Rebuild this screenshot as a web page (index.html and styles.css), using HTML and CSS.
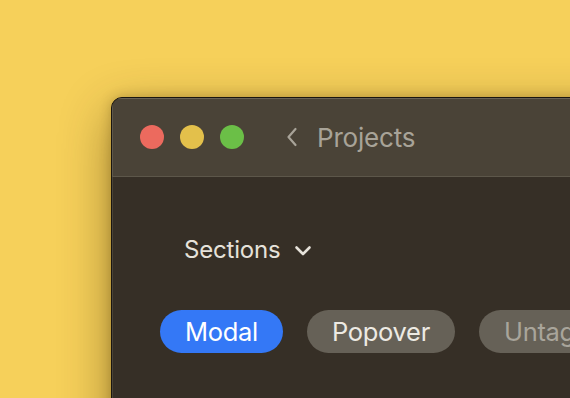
FILE: index.html
```html
<!DOCTYPE html>
<html>
<head>
<meta charset="utf-8">
<link rel="stylesheet" href="styles.css">
</head>
<body>
<div class="desk">
  <div class="window">
    <div class="titlebar">
      <div class="lights">
        <span class="light red"></span>
        <span class="light yellow"></span>
        <span class="light green"></span>
      </div>
      <svg class="back" width="12" height="20" viewBox="0 0 12 20"><path d="M9.5 2 L2.5 10 L9.5 18" fill="none" stroke="#a8a398" stroke-width="2.2" stroke-linecap="round" stroke-linejoin="round"/></svg>
      <span class="title">Projects</span>
    </div>
    <div class="content">
      <div class="sections">
        <span>Sections</span>
        <svg class="down" width="18" height="12" viewBox="0 0 18 12"><path d="M2.5 2.5 L9 9 L15.5 2.5" fill="none" stroke="#e6e2da" stroke-width="2.6" stroke-linecap="round" stroke-linejoin="round"/></svg>
      </div>
      <div class="pills">
        <span class="pill active">Modal</span>
        <span class="pill">Popover</span>
        <span class="pill dim">Untagged</span>
      </div>
    </div>
  </div>
</div>
</body>
</html>
```
FILE: styles.css
```css
html, body {
  margin: 0;
  padding: 0;
  width: 570px;
  height: 398px;
  overflow: hidden;
  background: #f6d05a;
  font-family: Inter, "Noto Sans", sans-serif;
}
.desk {
  padding: 97px 0 0 111px;
}
.window {
  width: 620px;
  height: 400px;
  border: 1px solid #1a1610;
  border-radius: 11px 0 0 0;
  background: #362f26;
  box-shadow: 0 16px 50px rgba(60, 40, 0, 0.45), 0 0 12px rgba(60, 40, 0, 0.25);
  overflow: hidden;
}
.titlebar {
  height: 78px;
  background: #4a4337;
  box-shadow: inset 0 1px 0 #6a6356, inset 1px 0 0 #5e584b;
  border-bottom: 1px solid #5d574a;
  display: flex;
  align-items: center;
  padding-left: 28px;
}
.lights {
  display: flex;
  gap: 16px;
}
.light {
  width: 24px;
  height: 24px;
  border-radius: 50%;
  display: block;
}
.red { background: #ec6a5e; }
.yellow { background: #e3c04b; }
.green { background: #6bbf47; }
.back {
  margin-left: 42px;
  display: block;
}
.title {
  margin-left: 19px;
  font-size: 26px;
  color: #a8a398;
  font-weight: 400;
  letter-spacing: -0.2px;
}
.content {
  box-shadow: inset 1px 0 0 #4a4438;
  height: 300px;
  padding-left: 48px;
}
.sections {
  padding: 58px 0 0 24px;
  display: flex;
  align-items: center;
  gap: 14px;
  color: #e6e2da;
  font-size: 24px;
  font-weight: 400;
  letter-spacing: -0.2px;
}
.down { display: block; margin-top: 2px; }
.pills {
  margin-top: 46px;
  display: flex;
  gap: 24px;
}
.pill {
  height: 43px;
  line-height: 43px;
  padding: 0 25px;
  border-radius: 22px;
  background: #666157;
  color: #edeae3;
  font-size: 25.5px;
  font-weight: 400;
  letter-spacing: -0.3px;
  white-space: nowrap;
}
.pill.active {
  background: #3478f6;
  color: #ffffff;
}
.pill.dim {
  color: #a9a59b;
}
```
